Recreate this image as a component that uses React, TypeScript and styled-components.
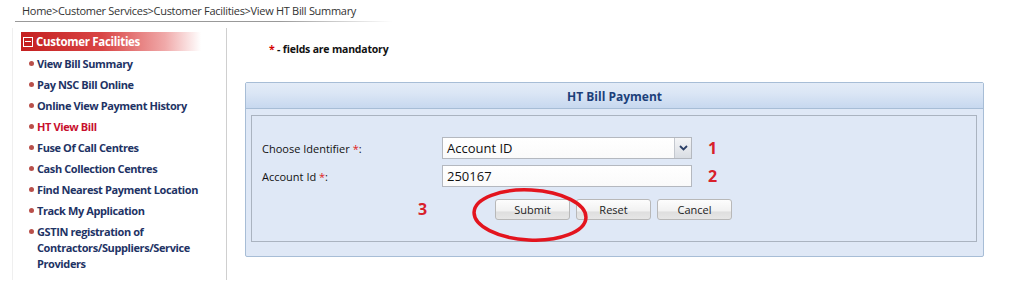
import styled, { createGlobalStyle } from "styled-components";

const GlobalStyle = createGlobalStyle`
  body {
    margin: 0;
    background: #fff;
    font-family: "Open Sans", "DejaVu Sans", sans-serif;
  }
`;

const Page = styled.div`
  width: 1010px;
  height: 291px;
  overflow: hidden;
`;

const Breadcrumb = styled.div`
  margin-left: 15px;
  width: 370px;
  padding: 3px 0 0 7px;
  height: 18px;
  font-size: 11px;
  color: #333;
  letter-spacing: -0.3px;
  border-bottom: 1px solid;
  border-image: linear-gradient(to right, #999 70%, #fff) 1;
`;

const Main = styled.div`
  display: flex;
  margin-top: 6px;
`;

const Sidebar = styled.div`
  margin-left: 12px;
  width: 205px;
  height: 248px;
  padding: 4px 0 0 8px;
  border-left: 1px solid #efefef;
  border-right: 1px solid #cfcfcf;
`;

const SideHeader = styled.div`
  display: flex;
  align-items: center;
  gap: 3px;
  width: 178px;
  height: 19px;
  padding-left: 2px;
  background: linear-gradient(to right, #c41f1f 0%, #d94545 45%, #f0a9a9 80%, #fff 100%);
  color: #fff;
  font-weight: bold;
  font-size: 11.5px;
  letter-spacing: -0.3px;
`;

const Toggle = styled.span`
  box-sizing: border-box;
  width: 10px;
  height: 10px;
  border: 1px solid #fff;
  background: #c41f1f;
  display: flex;
  align-items: center;
  justify-content: center;
  &::after {
    content: "";
    width: 6px;
    height: 1.5px;
    background: #fff;
  }
`;

const Menu = styled.ul`
  list-style: none;
  margin: 2px 0 0;
  padding: 0;
`;

const MenuItem = styled.li<{ $active?: boolean }>`
  position: relative;
  padding: 2.5px 0 2.5px 16px;
  width: 180px;
  line-height: 16px;
  font-size: 11px;
  font-weight: bold;
  letter-spacing: -0.4px;
  color: ${(p) => (p.$active ? "#c8102e" : "#1e3365")};
  &::before {
    content: "";
    position: absolute;
    left: 8px;
    top: 8px;
    width: 5px;
    height: 5px;
    border-radius: 50%;
    background: #b9504a;
  }
`;

const Content = styled.div`
  padding: 14px 0 0 18px;
`;

const Mandatory = styled.div`
  margin-left: 24px;
  font-size: 10.5px;
  font-weight: bold;
  color: #111;
  letter-spacing: -0.2px;
  span {
    color: #d40000;
  }
`;

const Panel = styled.div`
  margin-top: 26px;
  width: 737px;
  border: 1px solid #a7bdd6;
  border-radius: 2px;
  background: #dfe8f6;
  padding-bottom: 14px;
`;

const PanelTitle = styled.div`
  height: 25px;
  line-height: 27px;
  text-align: center;
  font-size: 12px;
  font-weight: bold;
  color: #1c3f7a;
  background: linear-gradient(to bottom, #e3ebf7 0%, #dbe6f5 40%, #c7d8ef 100%);
  border-bottom: 1px solid #a7bdd6;
`;

const Fieldset = styled.div`
  margin: 6px 6px 0 5px;
  height: 127px;
  border: 1px solid #aab3c0;
  padding: 21px 0 0 10px;
  box-sizing: border-box;
`;

const Row = styled.div`
  display: grid;
  grid-template-columns: 180px 250px 30px;
  align-items: center;
  margin-bottom: 6px;
`;

const Label = styled.div`
  font-size: 11px;
  color: #111;
  span {
    color: #e02020;
  }
`;

const Field = styled.div`
  position: relative;
  height: 22px;
  box-sizing: border-box;
  border: 1px solid #b4b8bf;
  background: linear-gradient(to bottom, #fff, #fafafa);
  font-size: 13px;
  padding-left: 4px;
  line-height: 20px;
  color: #111;
`;

const Arrow = styled.div`
  position: absolute;
  right: 0;
  top: 0;
  width: 16px;
  height: 20px;
  border-left: 1px solid #c4c8cf;
  background: linear-gradient(to bottom, #f4f5f7, #d9dde3);
  display: flex;
  align-items: center;
  justify-content: center;
`;

const Num = styled.div`
  padding-left: 16px;
  font-size: 16px;
  font-weight: bold;
  color: #d8212b;
  font-family: "Open Sans", sans-serif;
`;

const Actions = styled.div`
  display: flex;
  align-items: center;
  margin-top: 11px;
`;

const StepNum = styled(Num)`
  width: 77px;
  padding-left: 156px;
`;

const ButtonWrap = styled.div`
  position: relative;
  display: flex;
  gap: 6px;
`;

const Button = styled.button`
  width: 75px;
  height: 21px;
  padding: 0;
  border: 1px solid #b8b8b8;
  border-radius: 3px;
  background: linear-gradient(to bottom, #fdfdfd 0%, #f1f1f1 60%, #dedede 61%, #e6e6e6 100%);
  font-family: "Open Sans", sans-serif;
  font-size: 11px;
  color: #222;
`;

const Circle = styled.svg`
  position: absolute;
  left: -26px;
  top: -13px;
  pointer-events: none;
`;

const items = [
  "View Bill Summary",
  "Pay NSC Bill Online",
  "Online View Payment History",
  "HT View Bill",
  "Fuse Of Call Centres",
  "Cash Collection Centres",
  "Find Nearest Payment Location",
  "Track My Application",
  "GSTIN registration of Contractors/Suppliers/Service Providers",
];

export default function App() {
  return (
    <Page>
      <GlobalStyle />
      <Breadcrumb>Home&gt;Customer Services&gt;Customer Facilities&gt;View HT Bill Summary</Breadcrumb>
      <Main>
        <Sidebar>
          <SideHeader>
            <Toggle />
            Customer Facilities
          </SideHeader>
          <Menu>
            {items.map((t) => (
              <MenuItem key={t} $active={t === "HT View Bill"}>
                {t}
              </MenuItem>
            ))}
          </Menu>
        </Sidebar>
        <Content>
          <Mandatory>
            <span>*</span> - fields are mandatory
          </Mandatory>
          <Panel>
            <PanelTitle>HT Bill Payment</PanelTitle>
            <Fieldset>
              <Row>
                <Label>
                  Choose Identifier <span>*</span>:
                </Label>
                <Field>
                  Account ID
                  <Arrow>
                    <svg width="9" height="6" viewBox="0 0 9 6">
                      <path d="M1 1 L4.5 4.5 L8 1" fill="none" stroke="#2b3f66" strokeWidth="1.8" />
                    </svg>
                  </Arrow>
                </Field>
                <Num>1</Num>
              </Row>
              <Row>
                <Label>
                  Account Id <span>*</span>:
                </Label>
                <Field>250167</Field>
                <Num>2</Num>
              </Row>
              <Actions>
                <StepNum>3</StepNum>
                <ButtonWrap>
                  <Button>Submit</Button>
                  <Button>Reset</Button>
                  <Button>Cancel</Button>
                  <Circle width="124" height="58" viewBox="0 0 124 58">
                    <ellipse
                      cx="61"
                      cy="29"
                      rx="56"
                      ry="25"
                      fill="none"
                      stroke="#e3141e"
                      strokeWidth="3.5"
                      transform="rotate(3 61 29)"
                    />
                  </Circle>
                </ButtonWrap>
              </Actions>
            </Fieldset>
          </Panel>
        </Content>
      </Main>
    </Page>
  );
}
